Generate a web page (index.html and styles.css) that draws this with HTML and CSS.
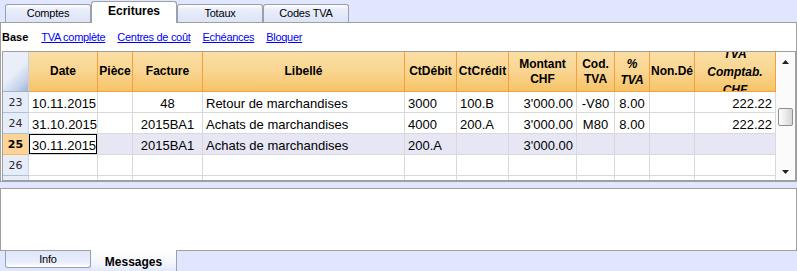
FILE: index.html
```html
<!DOCTYPE html>
<html lang="fr">
<head>
  <meta charset="UTF-8">
  <title>Ecritures</title>
  <link rel="stylesheet" href="styles.css">
</head>
<body>
  <div class="tabs">
    <div class="tab">Comptes</div>
    <div class="tab active">Ecritures</div>
    <div class="tab">Totaux</div>
    <div class="tab">Codes TVA</div>
  </div>

  <div class="panel">
    <div class="views">
      <b>Base</b>
      <a href="#">TVA complète</a>
      <a href="#">Centres de coût</a>
      <a href="#">Echéances</a>
      <a href="#">Bloquer</a>
    </div>

    <div class="frame">
      <div class="grid">
        <div class="hd corner"></div>
        <div class="hd">Date</div>
        <div class="hd">Pièce</div>
        <div class="hd">Facture</div>
        <div class="hd">Libellé</div>
        <div class="hd">CtDébit</div>
        <div class="hd">CtCrédit</div>
        <div class="hd">Montant<br>CHF</div>
        <div class="hd">Cod.<br>TVA</div>
        <div class="hd it pct">%<br>TVA</div>
        <div class="hd">Non.Dé</div>
        <div class="hd it tall">TVA<br>Comptab.<br>CHF</div>

        <div class="rh">23</div>
        <div class="cell">10.11.2015</div>
        <div class="cell"></div>
        <div class="cell c">48</div>
        <div class="cell">Retour de marchandises</div>
        <div class="cell">3000</div>
        <div class="cell">100.B</div>
        <div class="cell r">3'000.00</div>
        <div class="cell c">-V80</div>
        <div class="cell c">8.00</div>
        <div class="cell"></div>
        <div class="cell r">222.22</div>

        <div class="rh">24</div>
        <div class="cell">31.10.2015</div>
        <div class="cell"></div>
        <div class="cell c">2015BA1</div>
        <div class="cell">Achats de marchandises</div>
        <div class="cell">4000</div>
        <div class="cell">200.A</div>
        <div class="cell r">3'000.00</div>
        <div class="cell c">M80</div>
        <div class="cell c">8.00</div>
        <div class="cell"></div>
        <div class="cell r">222.22</div>

        <div class="rh current">25</div>
        <div class="cell sel focus">30.11.2015</div>
        <div class="cell sel"></div>
        <div class="cell sel c">2015BA1</div>
        <div class="cell sel">Achats de marchandises</div>
        <div class="cell sel">200.A</div>
        <div class="cell sel"></div>
        <div class="cell sel r">3'000.00</div>
        <div class="cell sel"></div>
        <div class="cell sel"></div>
        <div class="cell sel"></div>
        <div class="cell sel"></div>

        <div class="rh">26</div>
        <div class="cell"></div>
        <div class="cell"></div>
        <div class="cell"></div>
        <div class="cell"></div>
        <div class="cell"></div>
        <div class="cell"></div>
        <div class="cell"></div>
        <div class="cell"></div>
        <div class="cell"></div>
        <div class="cell"></div>
        <div class="cell"></div>

        <div class="rh">27</div>
        <div class="cell"></div>
        <div class="cell"></div>
        <div class="cell"></div>
        <div class="cell"></div>
        <div class="cell"></div>
        <div class="cell"></div>
        <div class="cell"></div>
        <div class="cell"></div>
        <div class="cell"></div>
        <div class="cell"></div>
        <div class="cell"></div>
      </div>

      <div class="scrollbar">
        <svg class="arrow" width="7" height="4" viewBox="0 0 7 4"><polygon points="0,4 7,4 3.5,0" fill="#222"/></svg>
        <div class="thumb"></div>
        <div class="track"></div>
        <svg class="arrow" width="7" height="4" viewBox="0 0 7 4"><polygon points="0,0 7,0 3.5,4" fill="#222"/></svg>
      </div>
    </div>
  </div>

  <div class="messages"></div>

  <div class="tabs bottom">
    <div class="tab">Info</div>
    <div class="tab active">Messages</div>
  </div>
</body>
</html>
```

FILE: styles.css
```css
body {
  margin: 0;
  width: 797px;
  height: 271px;
  overflow: hidden;
  background-color: #dfe6fd;
  font-family: 'Liberation Sans', Arial, sans-serif;
  color: #000;
}

/* tab strips */
.tabs {
  display: flex;
  align-items: flex-end;
  height: 22px;
  padding-left: 5px;
}

.tab {
  box-sizing: border-box;
  width: 86px;
  height: 18px;
  border: 1px solid #9aa1a8;
  border-bottom: none;
  border-radius: 3px 3px 0 0;
  background: linear-gradient(#ffffff, #eaeefb 25%, #dde4f8);
  font-size: 11px;
  letter-spacing: -0.2px;
  text-align: center;
  line-height: 17px;
}

.tab.active {
  position: relative;
  z-index: 1;
  height: 22px;
  margin-bottom: -1px;
  background: #fff;
  font-weight: bold;
  font-size: 12px;
  line-height: 19px;
  letter-spacing: 0;
}

.tabs.bottom {
  align-items: flex-start;
  height: 21px;
}

.tabs.bottom .tab {
  height: 17px;
  border: 1px solid #9aa1a8;
  border-top: none;
  border-radius: 0 0 3px 3px;
  background: linear-gradient(#dfe6fb, #e9eefc 70%, #ffffff);
  line-height: 16px;
}

.tabs.bottom .tab.active {
  height: 22px;
  margin-top: -1px;
  margin-bottom: 0;
  border: none;
  border-right: 1px solid #9aa1a8;
  border-radius: 0;
  background: linear-gradient(#ffffff, #f4f6fe 60%, #dfe6fd);
  line-height: 24px;
}

/* main panel */
.panel {
  box-sizing: border-box;
  height: 160px;
  border: 1px solid #a0a0a0;
  background-color: #fff;
}

.views {
  display: flex;
  align-items: center;
  gap: 12px;
  height: 28px;
  padding-left: 1px;
  font-size: 11px;
}

.views b {
  margin-right: 1px;
}

.views a {
  color: #0000ff;
  letter-spacing: -0.3px;
}

.frame {
  box-sizing: border-box;
  display: flex;
  height: 130px;
  margin-left: 1px;
  border: 1px solid #a0a0a0;
  overflow: hidden;
}

.grid {
  display: grid;
  grid-template-columns: 26px 69px 35px 70px 202px 52px 52px 68px 38px 35px 45px 81px;
  grid-template-rows: 40px;
  grid-auto-rows: 21px;
  width: 773px;
  overflow: hidden;
}

.hd {
  box-sizing: border-box;
  display: flex;
  align-items: center;
  justify-content: center;
  text-align: center;
  border-right: 1px solid #f4a03f;
  border-bottom: 1px solid #f4a03f;
  background: linear-gradient(#fadfa4, #f9d591 50%, #f6c368);
  font-size: 12px;
  font-weight: bold;
  line-height: 15px;
  overflow: hidden;
  white-space: nowrap;
}

.hd.it {
  font-style: italic;
}

.hd.pct {
  line-height: 16px;
}

.hd.tall {
  line-height: 18px;
}

.hd.corner {
  border-right: 1px solid #c3d1e6;
  border-bottom: 1px solid #9fb1cc;
  background: linear-gradient(135deg, #e9eef9 50%, #c5d2e8 80%, #9eb2d1);
}

.rh {
  box-sizing: border-box;
  border-right: 1px solid #c7d5e8;
  border-bottom: 1px solid #a9c0de;
  background-color: #e6edf8;
  font-family: 'DejaVu Sans', sans-serif;
  font-size: 11px;
  color: #2a2a3a;
  text-align: center;
  line-height: 21px;
}

.rh.current {
  background-color: #fdd496;
  border-bottom-color: #f0b860;
  font-weight: bold;
  color: #000;
}

.cell {
  box-sizing: border-box;
  padding: 2px 3px 0;
  border-right: 1px solid #d9d9d9;
  border-bottom: 1px solid #d9d9d9;
  font-size: 13px;
  line-height: 19px;
  white-space: nowrap;
  overflow: hidden;
}

.cell.c {
  text-align: center;
}

.cell.r {
  text-align: right;
}

.cell.sel {
  background-color: #e6e6f5;
}

.cell.focus {
  background-color: #fff;
  box-shadow: inset 0 0 0 1px #000;
}

.scrollbar {
  display: flex;
  flex-direction: column;
  align-items: center;
  width: 19px;
  padding: 8px 0 6px;
  box-sizing: border-box;
  background-color: #fbfbfb;
}

.thumb {
  box-sizing: border-box;
  width: 15px;
  height: 18px;
  margin-top: 44px;
  border: 1px solid #8f8f8f;
  border-radius: 2px;
  background: linear-gradient(90deg, #fdfdfd, #e6e6e6 60%, #d4d4d4);
}

.track {
  flex: 1;
}

.messages {
  box-sizing: border-box;
  height: 63px;
  margin-top: 6px;
  border: 1px solid #a0a0a0;
  background-color: #fff;
}
```
